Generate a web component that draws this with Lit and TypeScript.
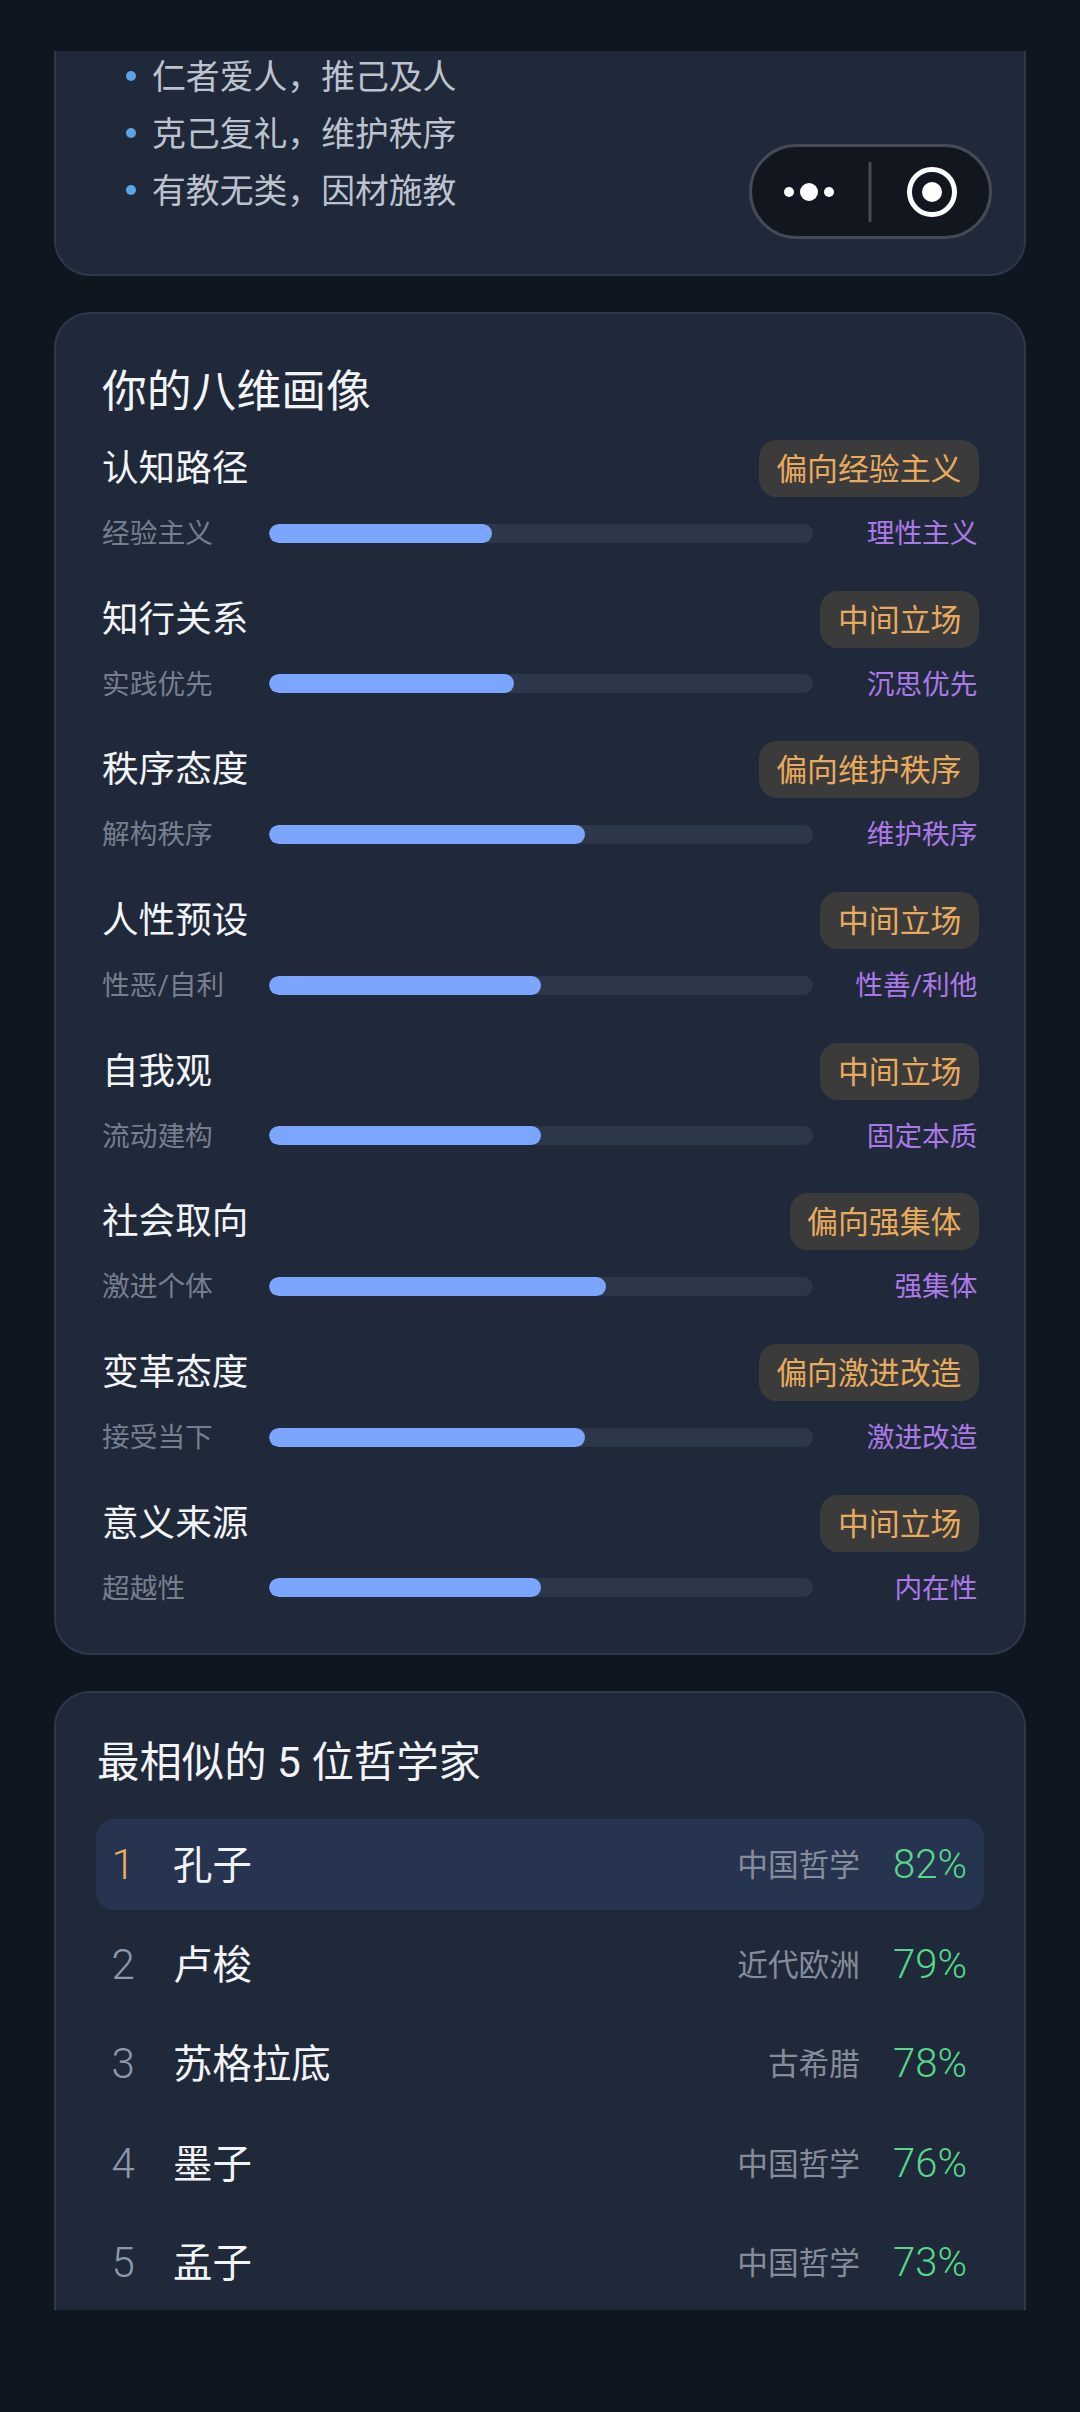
import { LitElement, html, css, svg } from "lit";
import { customElement } from "lit/decorators.js";

const DIMS = [
  { name: "认知路径", pill: "偏向经验主义", left: "经验主义", right: "理性主义", pct: 41 },
  { name: "知行关系", pill: "中间立场", left: "实践优先", right: "沉思优先", pct: 45 },
  { name: "秩序态度", pill: "偏向维护秩序", left: "解构秩序", right: "维护秩序", pct: 58 },
  { name: "人性预设", pill: "中间立场", left: "性恶/自利", right: "性善/利他", pct: 50 },
  { name: "自我观", pill: "中间立场", left: "流动建构", right: "固定本质", pct: 50 },
  { name: "社会取向", pill: "偏向强集体", left: "激进个体", right: "强集体", pct: 62 },
  { name: "变革态度", pill: "偏向激进改造", left: "接受当下", right: "激进改造", pct: 58 },
  { name: "意义来源", pill: "中间立场", left: "超越性", right: "内在性", pct: 50 },
];

const PEOPLE = [
  { name: "孔子", cat: "中国哲学", pct: "82%" },
  { name: "卢梭", cat: "近代欧洲", pct: "79%" },
  { name: "苏格拉底", cat: "古希腊", pct: "78%" },
  { name: "墨子", cat: "中国哲学", pct: "76%" },
  { name: "孟子", cat: "中国哲学", pct: "73%" },
];

@customElement("app-root")
export class AppRoot extends LitElement {
  static styles = css`
    :host {
      display: block;
      position: relative;
      width: 1080px;
      height: 2412px;
      overflow: hidden;
      background: #0f1620;
      font-family: "Roboto", "Noto Sans CJK SC", sans-serif;
      font-weight: 400;
    }
    * { box-sizing: border-box; }
    .scroller {
      position: absolute;
      left: 0;
      top: 51px;
      width: 1080px;
      height: 2259px;
      overflow: hidden;
      padding: 0 54px;
    }
    .card {
      background: #202939;
      border: 2px solid #2d384b;
      border-radius: 36px;
      margin-bottom: 36px;
    }
    .intro {
      margin-top: -100px;
      padding: 92.5px 46px 57.5px 70px;
    }
    .intro ul { list-style: none; margin: 0; padding: 0; }
    .intro li {
      display: flex;
      align-items: center;
      height: 57px;
      font-size: 33.85px;
      color: #bcc3cf;
    }
    .dot {
      width: 10px;
      height: 10px;
      border-radius: 50%;
      background: #5ba4e6;
      margin: 4px 16px 0 0;
      flex: none;
    }
    .dims {
      padding: 47px 45px 45px 46px;
      height: 1343px;
    }
    .dims h2 {
      margin: 0 0 17px;
      font-size: 44.8px;
      line-height: 62px;
      font-weight: 400;
      color: #f2f4f8;
    }
    .dim-list { display: flex; flex-direction: column; gap: 37.7px; }
    .head {
      display: flex;
      justify-content: space-between;
      align-items: center;
      height: 57px;
    }
    .dim-name { font-size: 36.6px; line-height: 51px; color: #f2f4f8; }
    .pill {
      height: 57px;
      line-height: 59px;
      padding: 0 17.5px;
      border-radius: 18px;
      background: #3c3b3c;
      color: #e8ab5c;
      font-size: 30.9px;
    }
    .scale {
      display: flex;
      align-items: center;
      margin-top: 16px;
      height: 40px;
      font-size: 27.7px;
    }
    .lo { width: 167px; color: #767f8e; flex: none; line-height: 36px; margin-top: 2px; }
    .hi { width: 166px; padding-right: 1.5px; color: #ab78e8; text-align: right; flex: none; line-height: 36px; margin-top: 2px; }
    .track {
      flex: 1;
      height: 19px;
      border-radius: 9.5px;
      background: #2c3749;
      overflow: hidden;
    }
    .fill { height: 100%; border-radius: 9.5px; background: #7ba5ff; }
    .sim { padding: 40px 40px 80px; }
    .sim h2 {
      margin: 0 0 26px 1px;
      font-size: 42.4px;
      line-height: 60px;
      font-weight: 400;
      color: #f2f4f8;
    }
    .people { display: flex; flex-direction: column; gap: 8.5px; }
    .person {
      display: flex;
      align-items: center;
      height: 91px;
      padding: 0 17px;
      border-radius: 18px;
    }
    .person.top { background: #27344f; }
    .rank { width: 61.5px; margin-left: -1.5px; flex: none; font-size: 42px; font-weight: 300; color: #8c99ac; }
    .person.top .rank { color: #f0b060; }
    .pname { flex: 1; font-size: 39.4px; color: #f2f4f8; margin-bottom: 6px; }
    .cat { font-size: 30.7px; color: #858d9b; margin: 0 31px 4px 0; }
    .score { width: 76px; font-size: 40px; font-weight: 300; color: #55d88a; text-align: right; }
    .capsule {
      position: absolute;
      left: 749px;
      top: 144px;
      width: 243px;
      height: 95px;
    }
  `;

  render() {
    return html`
      <div class="scroller">
        <section class="card intro">
          <ul>
            ${["仁者爱人，推己及人", "克己复礼，维护秩序", "有教无类，因材施教"].map(
              (t) => html`<li><span class="dot"></span>${t}</li>`
            )}
          </ul>
        </section>
        <section class="card dims">
          <h2>你的八维画像</h2>
          <div class="dim-list">
            ${DIMS.map(
              (d) => html`
                <div>
                  <div class="head">
                    <span class="dim-name">${d.name}</span>
                    <span class="pill">${d.pill}</span>
                  </div>
                  <div class="scale">
                    <span class="lo">${d.left}</span>
                    <div class="track"><div class="fill" style="width:${d.pct}%"></div></div>
                    <span class="hi">${d.right}</span>
                  </div>
                </div>
              `
            )}
          </div>
        </section>
        <section class="card sim">
          <h2>最相似的 5 位哲学家</h2>
          <div class="people">
            ${PEOPLE.map(
              (p, i) => html`
                <div class="person ${i === 0 ? "top" : ""}">
                  <span class="rank">${i + 1}</span>
                  <span class="pname">${p.name}</span>
                  <span class="cat">${p.cat}</span>
                  <span class="score">${p.pct}</span>
                </div>
              `
            )}
          </div>
        </section>
      </div>
      <svg class="capsule" viewBox="0 0 243 95" xmlns="http://www.w3.org/2000/svg">
        ${svg`
          <rect x="1.5" y="1.5" width="240" height="92" rx="46" fill="#12171f" stroke="#454b56" stroke-width="3"/>
          <rect x="119.5" y="18" width="3" height="60" fill="#454b56"/>
          <circle cx="40" cy="48" r="5" fill="#fff"/>
          <circle cx="60" cy="48" r="9" fill="#fff"/>
          <circle cx="80" cy="48" r="5" fill="#fff"/>
          <circle cx="183" cy="48" r="22.5" fill="none" stroke="#fff" stroke-width="5"/>
          <circle cx="183" cy="48" r="10" fill="#fff"/>
        `}
      </svg>
    `;
  }
}
